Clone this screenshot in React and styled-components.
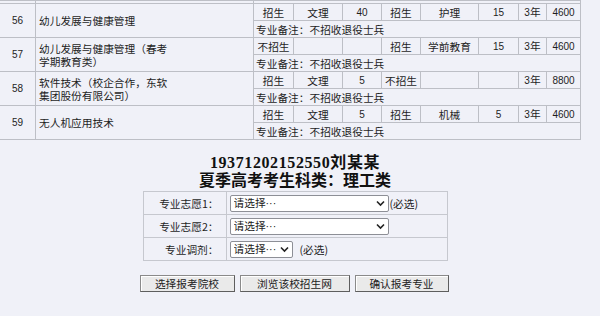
import React from "react";
import styled, { createGlobalStyle } from "styled-components";

const GlobalStyle = createGlobalStyle`
  html, body { margin: 0; padding: 0; }
  body {
    background: #f0f1f8;
    color: #1e1e1e;
    font-family: "Noto Sans CJK SC", "Liberation Sans", sans-serif;
    font-size: 10.7px;
    overflow: hidden;
  }
`;

const Page = styled.div`
  width: 600px;
  height: 316px;
  display: flex;
  flex-direction: column;
`;

const ListTable = styled.table`
  border-collapse: collapse;
  table-layout: fixed;
  width: 581px;
  margin-left: -1px;
`;

const Cell = styled.td`
  border: 1px solid #bdbfc6;
  padding: 0;
  height: ${(p) => (p.$tail ? "2px" : "16px")};
  line-height: 15px;
  font-size: ${(p) => (p.$tail ? "0" : "10.7px")};
  text-align: ${(p) => (p.$left ? "left" : "center")};
  vertical-align: middle;
  white-space: nowrap;
  overflow: hidden;
  padding-left: ${(p) => (p.$left ? "2px" : "0")};
`;

const Num = styled(Cell)`
  font-family: "Liberation Sans", sans-serif;
  font-size: 10px;
`;

const NameCell = styled(Cell)`
  text-align: left;
  white-space: normal;
  padding-left: 3px;
  line-height: 13px;
`;

const NameText = styled.span`
  display: block;
  width: 134px;
`;

const Digits = styled.span`
  font-family: "Liberation Sans", sans-serif;
  font-size: 10px;
`;

const Lower = styled.div`
  width: 590px;
  display: flex;
  flex-direction: column;
  align-items: center;
`;

const Title = styled.div`
  margin-top: 14px;
  font-family: "Liberation Serif", "Noto Sans CJK SC", serif;
  font-weight: bold;
  font-size: 16px;
  line-height: 18px;
  text-align: center;
  color: #111;
`;

const TitleId = styled.div`
  letter-spacing: 0.6px;
`;

const FormTable = styled.table`
  border-collapse: collapse;
  margin-top: 1px;
  width: 305px;
`;

const Label = styled.td`
  border: 1px solid #c6c8cf;
  width: 75px;
  height: 22px;
  padding: 0 7px 0 0;
  text-align: right;
  font-size: 10.7px;
  white-space: nowrap;
`;

const Control = styled.td`
  border: 1px solid #c6c8cf;
  height: 22px;
  padding: 0 0 0 3px;
  font-size: 10.7px;
  white-space: nowrap;
`;

const ControlRow = styled.div`
  display: flex;
  align-items: center;
  gap: ${(p) => p.$gap || 1}px;
`;

const SelectWrap = styled.div`
  position: relative;
  width: ${(p) => p.$w}px;
  height: 17px;
`;

const Select = styled.select`
  appearance: none;
  -webkit-appearance: none;
  width: 100%;
  height: 17px;
  box-sizing: border-box;
  border: 1px solid #8d8f96;
  border-radius: 2px;
  background: #fff;
  color: #222;
  font-family: "Liberation Sans", "Noto Sans CJK SC", sans-serif;
  font-size: 10.7px;
  line-height: 15px;
  padding: 0 0 0 3px;
  margin: 0;
  outline: none;
`;

const Chevron = styled.svg`
  position: absolute;
  right: 4px;
  top: 5px;
  pointer-events: none;
`;

const Required = styled.span`
  font-size: 10.7px;
  color: #222;
`;

const Buttons = styled.div`
  display: flex;
  gap: 5px;
  margin-top: 14px;
  margin-left: -2px;
`;

const Button = styled.button`
  width: ${(p) => p.$w}px;
  height: 17px;
  box-sizing: border-box;
  border: 1px solid #5e5e5e;
  border-top-color: #8a8a8a;
  border-left-color: #8a8a8a;
  background: #eaeaea;
  box-shadow: inset 1px 1px 0 #fff;
  font-family: "Noto Sans CJK SC", sans-serif;
  font-size: 10.7px;
  line-height: 14px;
  color: #222;
  padding: 0;
  margin: 0;
`;

const rows = [
  { no: "56", name: "幼儿发展与健康管理", cells: ["招生", "文理", "40", "招生", "护理", "15", "3年", "4600"] },
  { no: "57", name: "幼儿发展与健康管理（春考学期教育类）", cells: ["不招生", "", "", "招生", "学前教育", "15", "3年", "4600"] },
  { no: "58", name: "软件技术（校企合作，东软集团股份有限公司）", cells: ["招生", "文理", "5", "不招生", "", "", "3年", "8800"] },
  { no: "59", name: "无人机应用技术", cells: ["招生", "文理", "5", "招生", "机械", "5", "3年", "4600"] },
];

const widths = [36, 218, 40, 49, 39, 39, 58, 40, 28, 34];

const isNum = (s) => /^[0-9]+$/.test(s);

function Arrow() {
  return (
    <Chevron width="9" height="7" viewBox="0 0 9 7">
      <path d="M1 1.5 L4.5 5 L8 1.5" fill="none" stroke="#222" strokeWidth="1.6" />
    </Chevron>
  );
}

function Dropdown({ w }) {
  return (
    <SelectWrap $w={w}>
      <Select defaultValue="">
        <option value="">请选择···</option>
      </Select>
      <Arrow />
    </SelectWrap>
  );
}

function CellText({ c }) {
  if (isNum(c)) return <Digits>{c}</Digits>;
  if (c.endsWith("年")) return <><Digits>{c.slice(0, -1)}</Digits>年</>;
  return c;
}

export default function App() {
  return (
    <Page>
      <GlobalStyle />
      <ListTable>
        <colgroup>
          {widths.map((w, i) => (
            <col key={i} style={{ width: w }} />
          ))}
        </colgroup>
        <tbody>
          <tr>
            <Cell $tail />
            <Cell $tail />
            <Cell $tail colSpan={8} />
          </tr>
          {rows.map((r) => (
            <React.Fragment key={r.no}>
              <tr>
                <Num rowSpan={2}>{r.no}</Num>
                <NameCell rowSpan={2}>
                  <NameText>{r.name}</NameText>
                </NameCell>
                {r.cells.map((c, i) => (
                  <Cell key={i}><CellText c={c} /></Cell>
                ))}
              </tr>
              <tr>
                <Cell $left colSpan={8}>专业备注：不招收退役士兵</Cell>
              </tr>
            </React.Fragment>
          ))}
        </tbody>
      </ListTable>
      <Lower>
        <Title>
          <TitleId>19371202152550刘某某</TitleId>
          <div>夏季高考考生科类：理工类</div>
        </Title>
        <FormTable>
          <tbody>
            <tr>
              <Label>专业志愿1：</Label>
              <Control>
                <ControlRow>
                  <Dropdown w={159} />
                  <Required>(必选)</Required>
                </ControlRow>
              </Control>
            </tr>
            <tr>
              <Label>专业志愿2：</Label>
              <Control>
                <ControlRow>
                  <Dropdown w={159} />
                </ControlRow>
              </Control>
            </tr>
            <tr>
              <Label>专业调剂：</Label>
              <Control>
                <ControlRow $gap={7}>
                  <Dropdown w={63} />
                  <Required>(必选)</Required>
                </ControlRow>
              </Control>
            </tr>
          </tbody>
        </FormTable>
        <Buttons>
          <Button $w={95}>选择报考院校</Button>
          <Button $w={110}>浏览该校招生网</Button>
          <Button $w={94}>确认报考专业</Button>
        </Buttons>
      </Lower>
    </Page>
  );
}
